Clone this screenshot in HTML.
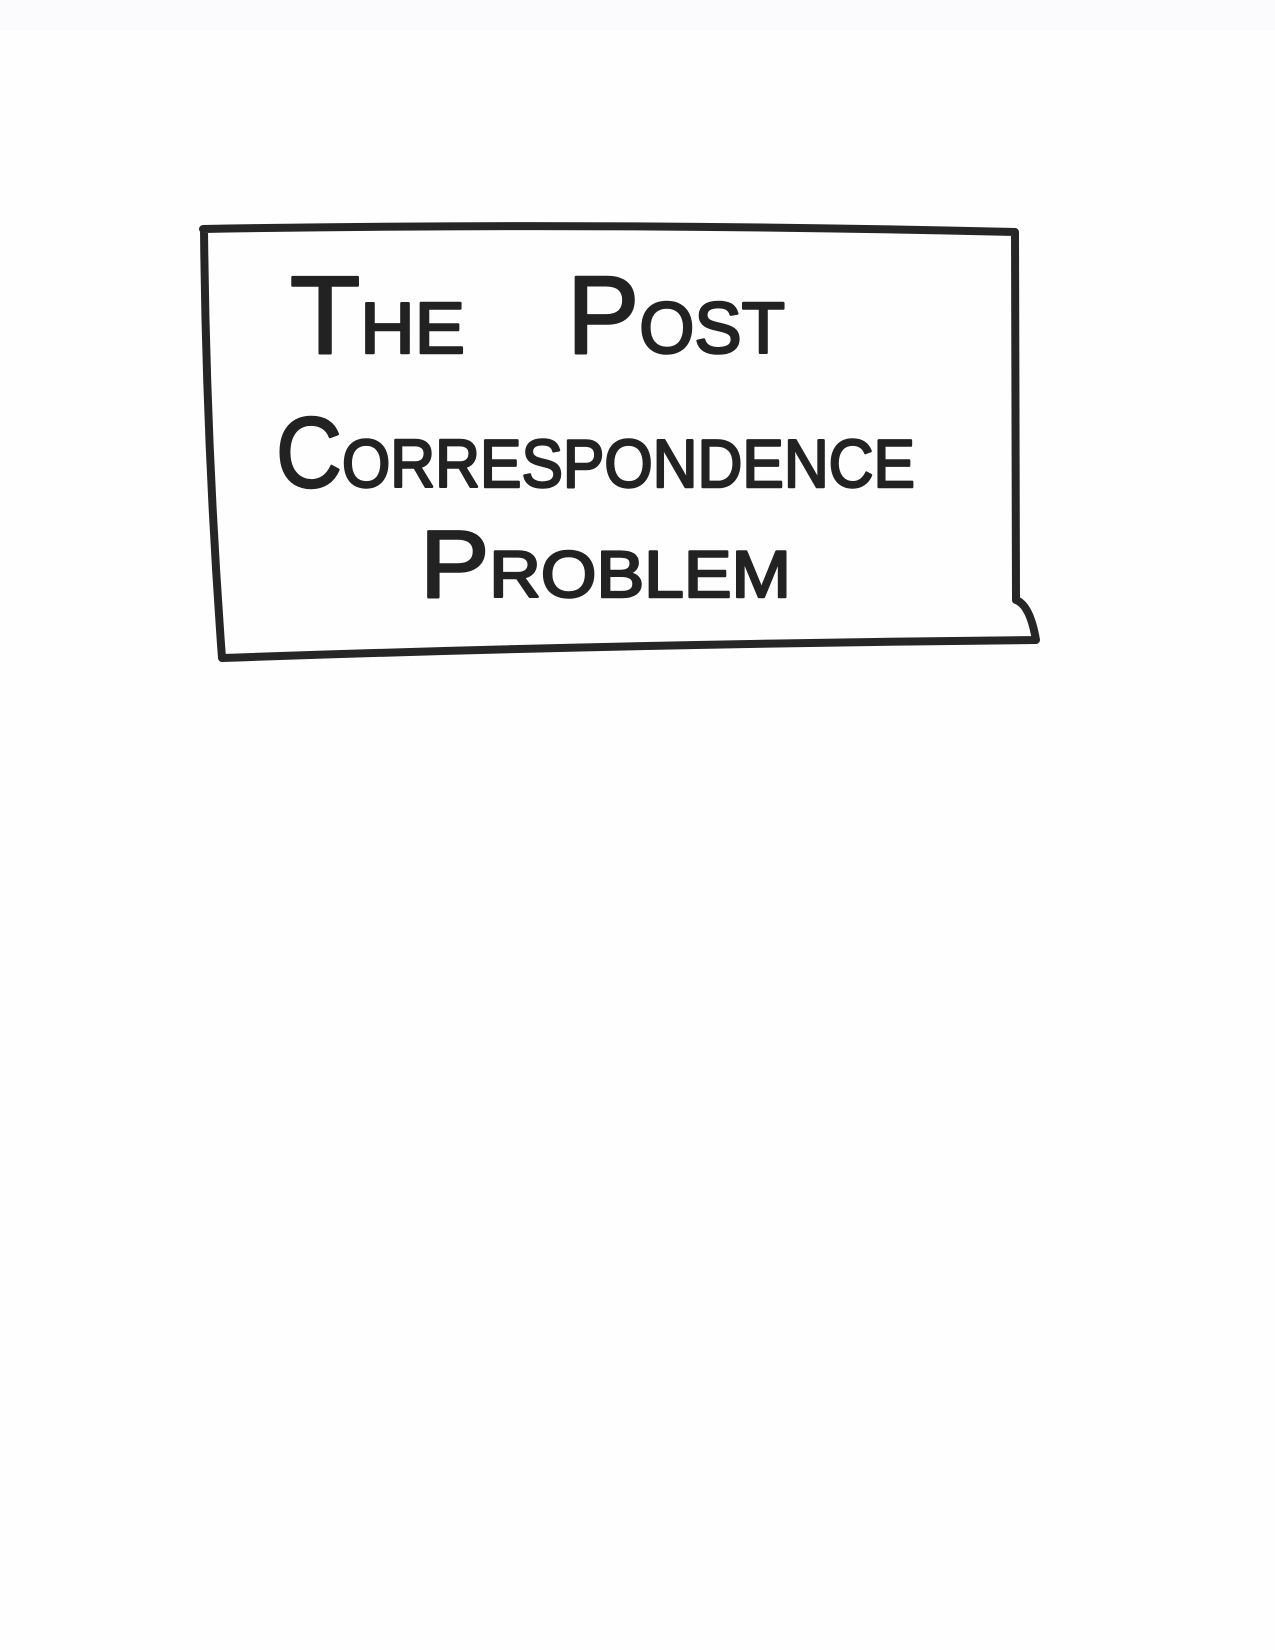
<!DOCTYPE html>
<html><head><meta charset="utf-8">
<style>
html,body{margin:0;padding:0;background:#fefefe;}
svg{display:block;}
text{font-family:"Liberation Sans",sans-serif;fill:#222;stroke:#222;stroke-width:2.5;stroke-linejoin:round;}
</style></head>
<body>
<svg width="1275" height="1650" viewBox="0 0 1275 1650" xmlns="http://www.w3.org/2000/svg">
<rect x="0" y="0" width="1275" height="30" fill="#fbfbfd"/>
<path d="M203 229 Q600 222 1015 232 L1016 600 Q1030 605 1036 640 Q620 644 222 658 Q206 440 204 229 Z" fill="none" stroke="#262626" stroke-width="8" stroke-linejoin="round" stroke-linecap="round"/>
<text x="290" y="353" textLength="175" lengthAdjust="spacingAndGlyphs"><tspan font-size="110">T</tspan><tspan font-size="72">HE</tspan></text>
<text x="567" y="353" textLength="218" lengthAdjust="spacingAndGlyphs"><tspan font-size="110">P</tspan><tspan font-size="72">OST</tspan></text>
<text x="276" y="487" textLength="639" lengthAdjust="spacingAndGlyphs"><tspan font-size="100">C</tspan><tspan font-size="68">ORRESPONDENCE</tspan></text>
<text x="420" y="597" textLength="371" lengthAdjust="spacingAndGlyphs"><tspan font-size="96">P</tspan><tspan font-size="66">ROBLEM</tspan></text>
</svg>
</body></html>
